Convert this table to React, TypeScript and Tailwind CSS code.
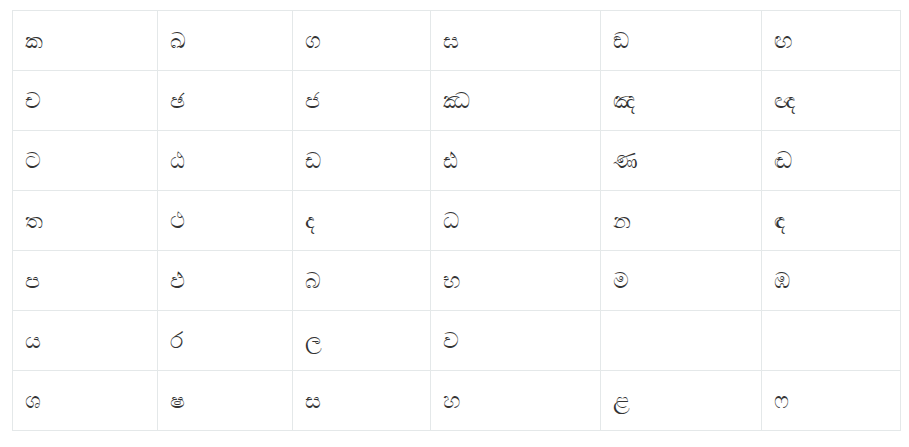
const rows: string[][] = [
  ['ක', 'ඛ', 'ග', 'ඝ', 'ඞ', 'ඟ'],
  ['ච', 'ඡ', 'ජ', 'ඣ', 'ඤ', 'ඥ'],
  ['ට', 'ඨ', 'ඩ', 'ඪ', 'ණ', 'ඬ'],
  ['ත', 'ථ', 'ද', 'ධ', 'න', 'ඳ'],
  ['ප', 'ඵ', 'බ', 'භ', 'ම', 'ඹ'],
  ['ය', 'ර', 'ල', 'ව', '', ''],
  ['ශ', 'ෂ', 'ස', 'හ', 'ළ', 'ෆ'],
];

const widths = ['w-[145px]', 'w-[135px]', 'w-[138px]', 'w-[170px]', 'w-[161px]', 'w-[139px]'];

export default function App() {
  return (
    <div className="bg-white pt-[10px] pl-3 font-['Liberation_Sans','Noto_Sans',sans-serif] text-[#333]">
      <table className="border-collapse table-fixed w-[889px]">
        <tbody>
          {rows.map((row, i) => (
            <tr key={i} className="h-[60px]">
              {row.map((ch, j) => (
                <td
                  key={j}
                  className={`${widths[j]} border border-[#e4e8e9] px-3 align-middle text-[22px] leading-none`}
                >
                  {ch}
                </td>
              ))}
            </tr>
          ))}
        </tbody>
      </table>
    </div>
  );
}
